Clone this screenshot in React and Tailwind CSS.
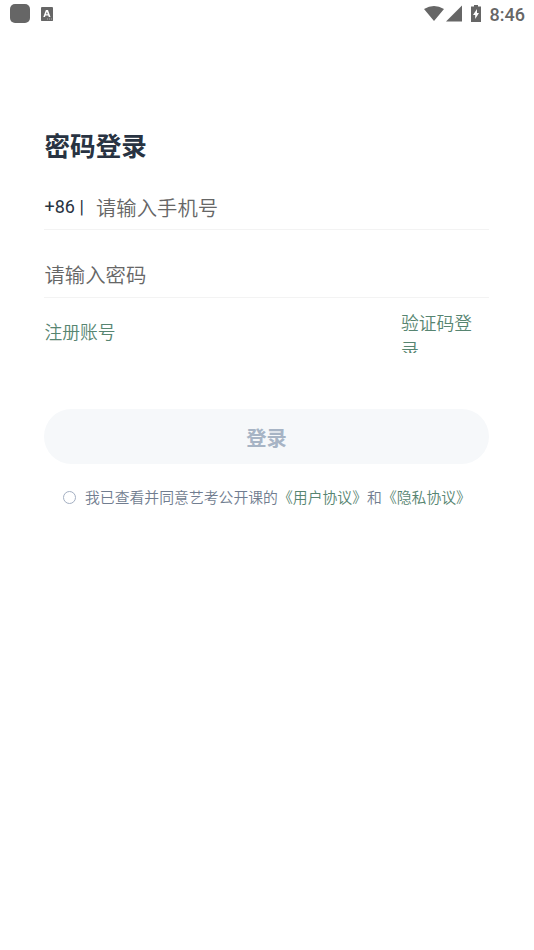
export default function App() {
  return (
    <div className="h-[950px] w-[534px] overflow-hidden bg-white font-['Roboto','Noto_Sans_CJK_SC',sans-serif]">
      <header className="flex h-[27px] items-center pl-[10px] pr-[9px] text-[#666]">
        <div className="h-[19px] w-[20px] rounded-[5px] bg-[#666]" />
        <svg className="ml-[11px]" width="12" height="14" viewBox="0 0 12 14"><path fill="#666" d="M.5 0h11l.5.5v13l-.5.500H.5l-.500-.500V.5z" /><path fill="#fff" fillRule="evenodd" d="M4.900 3 2.300 10h1.700l.5-1.500h2.800l.5 1.500h1.700L7 3zM5.900 4.800l.9 2.500H5z" /><path fill="#aaa" d="M6 11.500h1v1H6zM8 11.500h1v1H8zM10 11.500h1v1h-1z" /></svg>
        <svg className="ml-auto" width="58" height="18" viewBox="0 0 58 18" fill="#666"><path d="M0 4Q10-2 20 4L10 16zM38 .500v16H22zM50 0h4v1.500h3V17H47V1.500h3z" /><path d="m53 4-4 6h2.200v4L55 8h-2z" fill="white" /></svg>
        <span className="ml-[8px] pt-px text-[18px] font-medium leading-[27px]">8:46</span>
      </header>
      <main className="pl-[44px] pr-[45px] pt-[99px]">
        <h1 className="h-[40px] pl-[.5px] pt-px text-[25.600px] font-bold leading-[40px] text-[#283342]">密码登录</h1>
        <div className="mt-[20px] flex h-[44px] items-center border-b border-[#f3f3f3]">
          <span className="w-[52px] pb-[2px] pl-[.5px] text-[18px] text-[#283342]">+86 |</span>
          <span className="pt-[3px] text-[20.350px] font-[350] text-[#666]">请输入手机号</span>
        </div>
        <div className="mt-[24px] flex h-[44px] items-center border-b border-[#f3f3f3] pl-[.5px] pt-[2px] text-[20.350px] font-[350] text-[#666]">请输入密码</div>
        <div className="mt-[12px] flex h-[43px] justify-between text-[17.800px] font-[350] leading-[27px] text-[#578571]">
          <span className="pl-[.5px] pt-[9px]">注册账号</span>
          <span className="w-[88px] overflow-hidden">验证码登<br />录</span>
        </div>
        <button className="mt-[56px] h-[55px] w-full rounded-full bg-[#f6f8fa] pt-[5px] text-[20.300px] font-bold text-[#a7b4c5]">登录</button>
        <div className="mt-[23px] flex h-[22px] items-center pl-[19px] text-[14.850px] font-[350] text-[#717d90]">
          <i className="mb-px mr-[9px] h-[13px] w-[13px] rounded-full border border-[#a3afc2]" />
          <span className="whitespace-nowrap">我已查看并同意艺考公开课的<span className="text-[#578571]">《用户协议》</span>和<span className="text-[#578571]">《隐私协议》</span></span>
        </div>
      </main>
    </div>
  );
}
